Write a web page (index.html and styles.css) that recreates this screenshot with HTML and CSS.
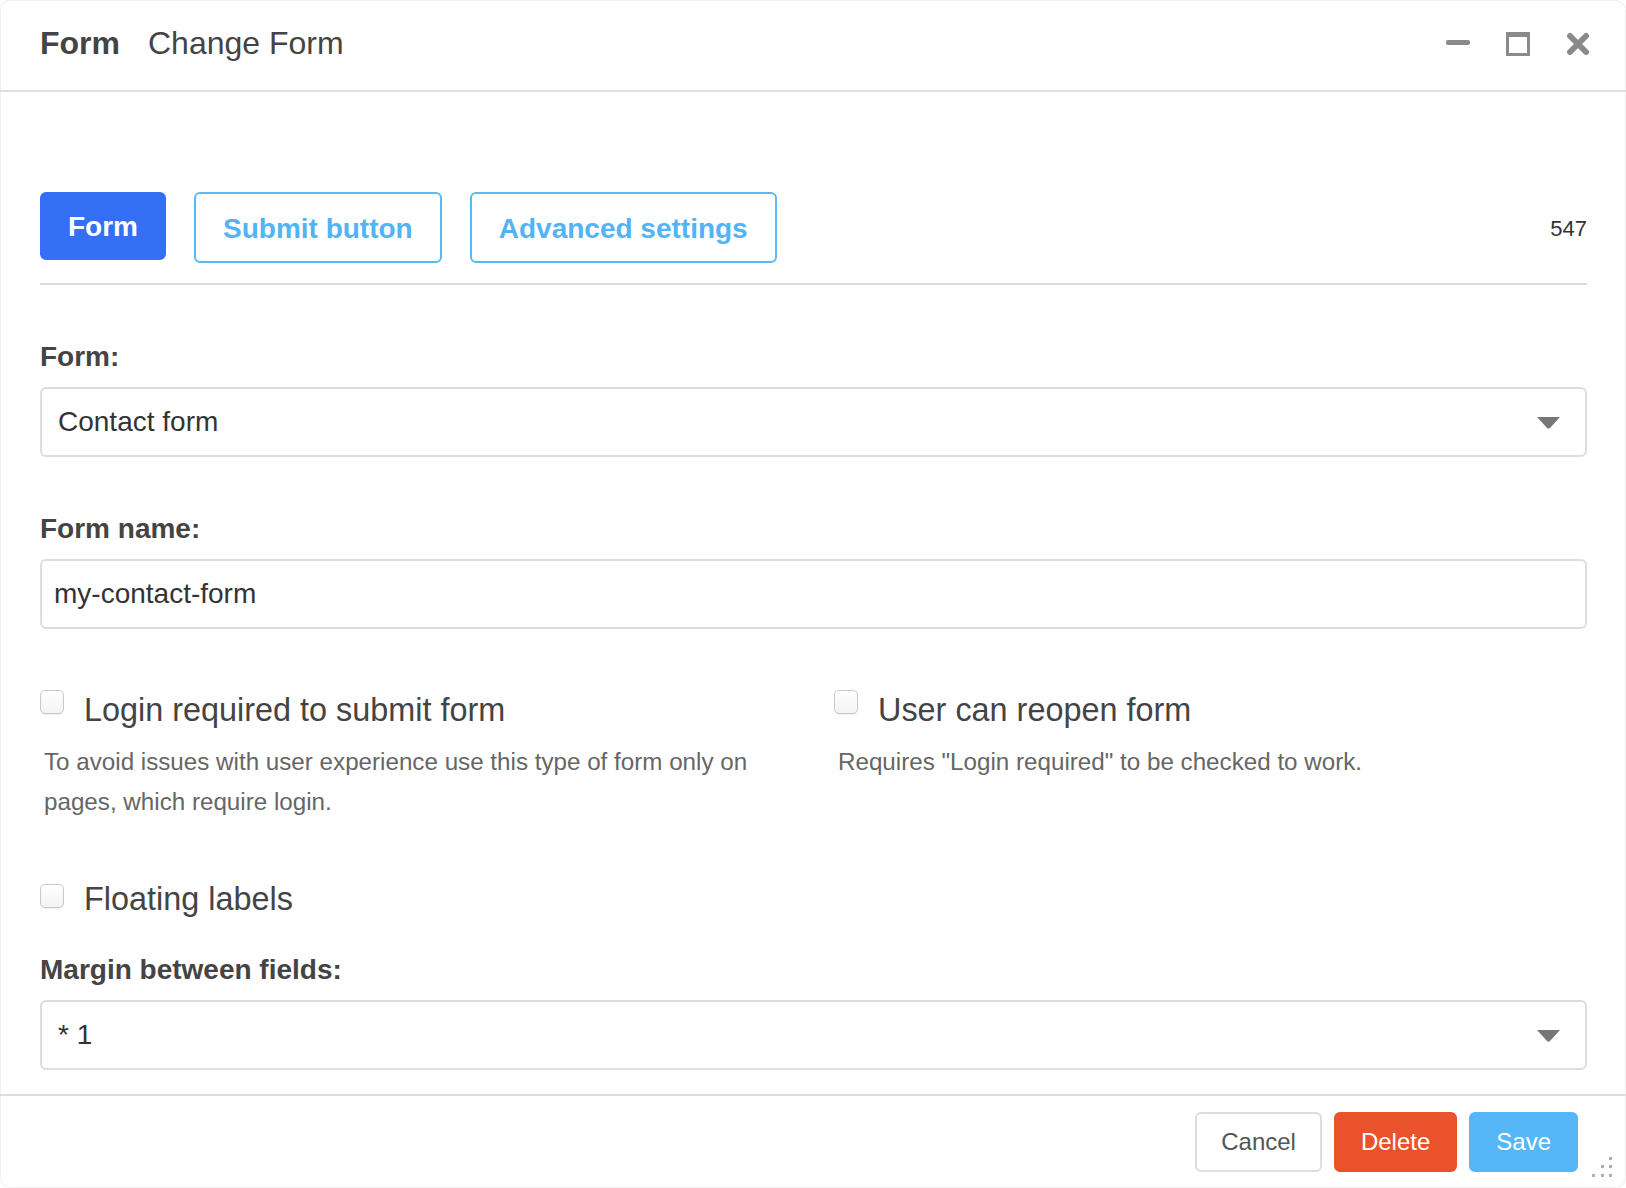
FILE: index.html
```html
<!DOCTYPE html>
<html lang="en">
<head>
<meta charset="utf-8">
<title>Change Form</title>
<link rel="stylesheet" href="styles.css">
</head>
<body>
<div class="window">
  <header class="win-header">
    <div class="win-title"><span class="win-title-main">Form</span><span class="win-title-sub">Change Form</span></div>
    <div class="win-controls">
      <svg class="ctl" width="24" height="24" viewBox="0 0 24 24"><rect x="0" y="8" width="24" height="5" rx="2" fill="#8a8a8a"/></svg>
      <svg class="ctl" width="24" height="24" viewBox="0 0 24 24"><rect x="0" y="0" width="24" height="24" fill="#8a8a8a"/><rect x="3" y="5" width="18" height="16" fill="#fff"/></svg>
      <svg class="ctl" width="24" height="24" viewBox="0 0 24 24"><path d="M4 4 L20 20 M20 4 L4 20" stroke="#8a8a8a" stroke-width="6" stroke-linecap="round"/></svg>
    </div>
  </header>

  <main class="win-body">
    <div class="tabs-row">
      <div class="tabs">
        <button class="tab tab-active">Form</button>
        <button class="tab">Submit button</button>
        <button class="tab">Advanced settings</button>
      </div>
      <div class="tab-id">547</div>
    </div>

    <div class="field">
      <label class="field-label">Form:</label>
      <div class="select">
        <span class="select-value">Contact form</span>
        <svg class="select-arrow" width="23" height="12" viewBox="0 0 23 12"><path d="M0 0 H23 L12.5 11.5 H10.5 Z" fill="#777"/></svg>
      </div>
    </div>

    <div class="field">
      <label class="field-label">Form name:</label>
      <div class="input"><span class="input-value">my-contact-form</span></div>
    </div>

    <div class="check-grid">
      <div class="check-col">
        <div class="check-row"><span class="checkbox"></span><span class="check-label">Login required to submit form</span></div>
        <p class="help">To avoid issues with user experience use this type of form only on pages, which require login.</p>
      </div>
      <div class="check-col">
        <div class="check-row"><span class="checkbox"></span><span class="check-label">User can reopen form</span></div>
        <p class="help">Requires "Login required" to be checked to work.</p>
      </div>
    </div>

    <div class="check-row check-single"><span class="checkbox"></span><span class="check-label">Floating labels</span></div>

    <div class="field field-tight">
      <label class="field-label">Margin between fields:</label>
      <div class="select">
        <span class="select-value">* 1</span>
        <svg class="select-arrow" width="23" height="12" viewBox="0 0 23 12"><path d="M0 0 H23 L12.5 11.5 H10.5 Z" fill="#777"/></svg>
      </div>
    </div>
  </main>

  <footer class="win-footer">
    <button class="btn btn-cancel">Cancel</button>
    <button class="btn btn-delete">Delete</button>
    <button class="btn btn-save">Save</button>
    <svg class="grip" width="28" height="24" viewBox="0 0 28 24">
      <rect x="17" y="3" width="3" height="3" fill="#b0b0b0"/>
      <rect x="9" y="11" width="3" height="3" fill="#b0b0b0"/>
      <rect x="17" y="11" width="3" height="3" fill="#b0b0b0"/>
      <rect x="0" y="20" width="3" height="3" fill="#b0b0b0"/>
      <rect x="9" y="20" width="3" height="3" fill="#b0b0b0"/>
      <rect x="17" y="20" width="3" height="3" fill="#b0b0b0"/>
    </svg>
  </footer>
</div>
</body>
</html>
```

FILE: styles.css
```css
* { box-sizing: border-box; }

html, body {
  margin: 0;
  padding: 0;
  background: #ffffff;
}

body {
  font-family: "Liberation Sans", Arial, Helvetica, sans-serif;
  color: #444;
}

.window {
  width: 1626px;
  height: 1188px;
  display: flex;
  flex-direction: column;
  background: #fff;
  border-radius: 10px;
  overflow: hidden;
  box-shadow: inset 0 0 0 1px #f0f0f0;
  position: relative;
}

/* Header */
.win-header {
  height: 92px;
  flex: 0 0 92px;
  border-bottom: 2px solid #dddddd;
  display: flex;
  align-items: center;
  justify-content: space-between;
  padding: 0 36px 0 40px;
}

.win-title {
  display: flex;
  align-items: center;
  font-size: 32px;
  color: #444;
  line-height: 40px;
  margin-top: -4px;
}

.win-title-main {
  font-weight: bold;
  margin-right: 28px;
}

.win-controls {
  display: flex;
  gap: 36px;
  align-items: center;
  margin-top: -3px;
}

.ctl { display: block; }

/* Body */
.win-body {
  flex: 1 1 auto;
  overflow: hidden;
  padding: 0 39px 0 40px;
}

.tabs-row {
  margin-top: 100px;
  padding-bottom: 20px;
  border-bottom: 2px solid #dddddd;
  display: flex;
  align-items: center;
  justify-content: space-between;
}

.tabs {
  display: flex;
  gap: 28px;
  align-items: flex-start;
}

.tab {
  font-family: "Liberation Sans", Arial, Helvetica, sans-serif;
  font-size: 28px;
  font-weight: bold;
  height: 71px;
  padding: 3px 27px 0;
  border: 2px solid #5ab8f6;
  border-radius: 6px;
  background: #fff;
  color: #52b3f5;
  cursor: pointer;
}

.tab-active {
  height: 68px;
  margin-top: 0;
  background: #346ff5;
  border-color: #346ff5;
  color: #fff;
  padding: 1px 26px 0;
}

.tab-id {
  font-size: 22px;
  color: #333;
  margin-top: 3px;
}

/* Fields */
.field {
  margin-top: 55px;
  display: flex;
  flex-direction: column;
  gap: 13px;
}

.field-label {
  font-size: 28px;
  font-weight: bold;
  line-height: 34px;
  color: #444;
}

.select, .input {
  height: 70px;
  border: 2px solid #dddddd;
  border-radius: 6px;
  display: flex;
  align-items: center;
  font-size: 28px;
  color: #333;
}

.select {
  padding: 0 25px 0 16px;
  justify-content: space-between;
}

.input {
  padding: 0 12px;
}

.select-arrow { display: block; margin-top: 2px; }

/* Checkboxes */
.check-grid {
  margin-top: 60px;
  display: grid;
  grid-template-columns: 1fr 1fr;
  column-gap: 41px;
}

.check-row {
  display: flex;
  align-items: flex-start;
  gap: 20px;
}

.checkbox {
  width: 24px;
  height: 24px;
  flex: 0 0 24px;
  margin-top: 1px;
  border: 1px solid #c9c9c9;
  border-radius: 5px;
  background: linear-gradient(#ffffff, #f3f3f3);
  box-shadow: 0 1px 1px rgba(0,0,0,0.06);
}

.check-label {
  font-size: 32.4px;
  line-height: 40px;
  color: #444;
  margin-top: 1px;
}

.help {
  margin: 12px 0 0 0;
  padding-left: 4px;
  font-size: 24.2px;
  line-height: 40px;
  color: #666;
}

.check-single {
  margin-top: 56px;
}

.check-single .checkbox {
  margin-top: 6px;
}

.field-tight {
  margin-top: 34px;
}

/* Footer */
.win-footer {
  flex: 0 0 94px;
  border-top: 2px solid #dddddd;
  display: flex;
  justify-content: flex-end;
  align-items: flex-start;
  gap: 12px;
  padding: 16px 48px 0 0;
  position: relative;
}

.btn {
  font-family: "Liberation Sans", Arial, Helvetica, sans-serif;
  font-size: 24px;
  height: 60px;
  padding: 0 24px;
  border: 2px solid transparent;
  border-radius: 6px;
  cursor: pointer;
}

.btn-cancel {
  background: #fff;
  border-color: #dddddd;
  color: #555;
  padding: 0 24px;
}

.btn-delete {
  background: #e9522a;
  border-color: #e9522a;
  color: #fff;
  padding: 0 25px;
}

.btn-save {
  background: #56b7f8;
  border-color: #56b7f8;
  color: #fff;
  padding: 0 25px;
}

.grip {
  position: absolute;
  right: 6px;
  bottom: 10px;
}
```
